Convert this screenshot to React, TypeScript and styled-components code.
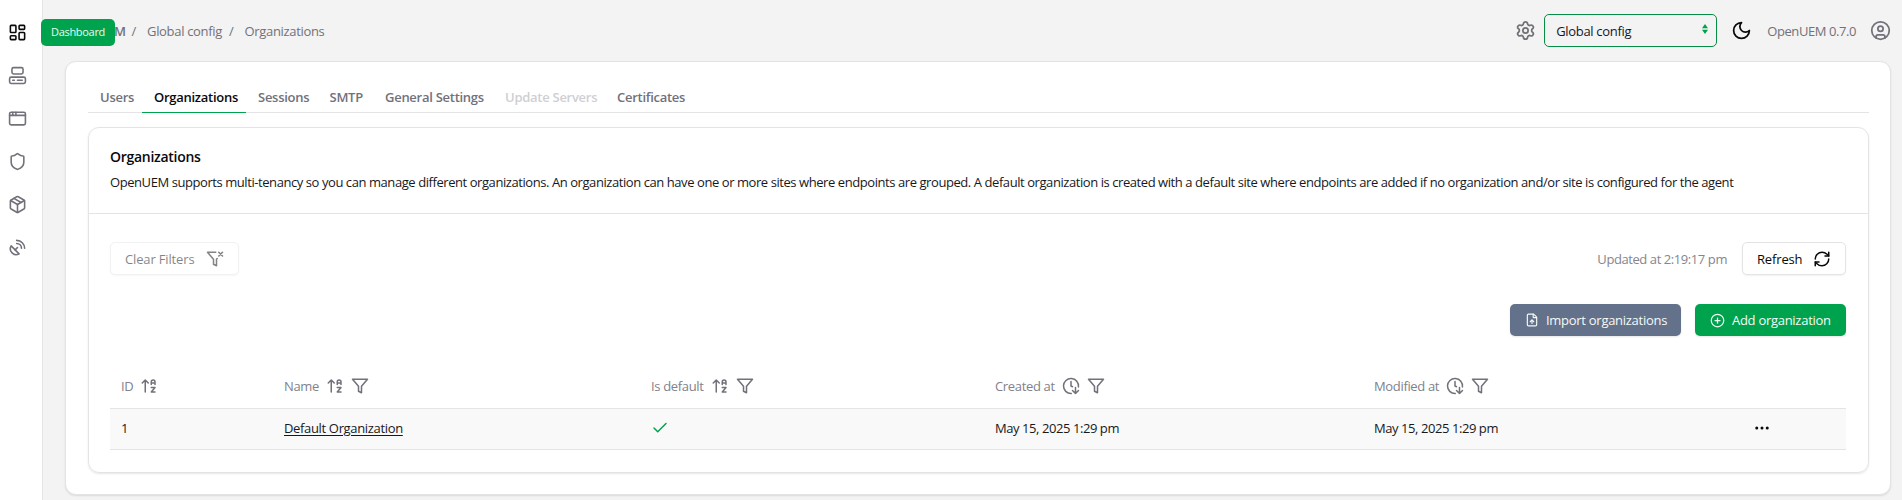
import React from 'react';
import styled, { createGlobalStyle, css } from 'styled-components';
import {
  AppWindow, Check, CircleUser, CirclePlus, Computer, Ellipsis, FileUp, LayoutDashboard,
  Package, RefreshCw, SatelliteDish, Settings, Shield,
} from 'lucide-react';

const green = '#00a34d';
const line = '#e4e4e7';
const muted = '#71717a';

const GlobalStyle = createGlobalStyle`
  *, *::before, *::after { box-sizing: border-box; }
  body {
    margin: 0;
    background: #f3f3f3;
    color: #18181b;
    font: 400 13px/18px "Open Sans", "Noto Sans", sans-serif;
    overflow: hidden;
  }
  svg { display: block; flex: none; }
`;

const Shell = styled.div`
  display: flex;
  height: 500px;
`;

const Sidebar = styled.nav`
  flex: none;
  width: 43px;
  padding-top: 10.5px;
  background: #fff;
  border-right: 1px solid ${line};
`;

const NavItem = styled.a<{ $active?: boolean }>`
  position: relative;
  display: flex;
  align-items: center;
  height: 43px;
  padding-left: 8px;
  color: ${p => (p.$active ? '#09090b' : muted)};
`;

const Tooltip = styled.span`
  position: absolute;
  z-index: 2;
  left: 41px;
  top: 8.5px;
  width: 74px;
  height: 27px;
  border-radius: 5px;
  background: ${green};
  color: #e9faf0;
  font-size: 11px;
  line-height: 26px;
  letter-spacing: -0.3px;
  text-align: center;
`;

const Main = styled.main`
  flex: 1;
  min-width: 0;
  padding: 0 11px 0 22px;
`;

const TopBar = styled.header`
  display: flex;
  justify-content: space-between;
  align-items: center;
  height: 61px;
  color: ${muted};
`;

const Breadcrumb = styled.div`
  display: flex;
  letter-spacing: -0.32px;
`;

const Crumb = styled.span<{ $root?: boolean }>`
  ${p => p.$root
    ? css`width: 59.5px; font-weight: 600; text-align: right;`
    : css`
      &::before { content: '/'; display: inline-block; width: 15.5px; }
      margin-left: 7px;
    `}
`;

const Tools = styled.div`
  display: flex;
  align-items: center;
  color: ${muted};
`;

const TenantSelect = styled.div`
  display: flex;
  align-items: center;
  justify-content: space-between;
  width: 173px;
  height: 33px;
  margin: 0 14px 0 8px;
  padding: 0 8px 0 11px;
  border: 1px solid #078c48;
  border-radius: 5px;
  color: #18181b;
  letter-spacing: -0.32px;
`;

const Version = styled.span`
  margin: 0 14px 0 15px;
  letter-spacing: -0.42px;
`;

const Panel = styled.section`
  height: 434px;
  padding: 22px 21px 0 22px;
  background: #fff;
  border: 1px solid ${line};
  border-radius: 11px;
  box-shadow: 0 1px 2px rgba(0, 0, 0, 0.1);
`;

const Tabs = styled.div`
  display: flex;
  height: 29px;
  border-bottom: 1px solid ${line};
`;

const Tab = styled.span<{ $w: number; $active?: boolean; $disabled?: boolean }>`
  width: ${p => p.$w}px;
  height: 29px;
  padding: 4px 0 0 12px;
  border-bottom: 1px solid ${p => (p.$active ? green : 'transparent')};
  color: ${p => (p.$active ? '#09090b' : p.$disabled ? '#cfcfd3' : muted)};
  font-weight: 600;
  letter-spacing: -0.27px;
  white-space: nowrap;
`;

const Card = styled.section`
  height: 346px;
  margin-top: 14px;
  border: 1px solid ${line};
  border-radius: 11px;
  box-shadow: 0 1px 2px rgba(0, 0, 0, 0.1);
`;

const CardHead = styled.div`
  height: 86px;
  padding: 20px 21px 0;
  border-bottom: 1px solid ${line};
`;

const Title = styled.h3`
  margin: 0;
  color: #09090b;
  font-size: 14px;
  font-weight: 600;
  line-height: 18px;
  letter-spacing: -0.28px;
`;

const Description = styled.p`
  margin: 7px 0 0;
  letter-spacing: -0.43px;
  white-space: nowrap;
`;

const CardBody = styled.div`
  padding: 28px 22px 0 21px;
`;

const Toolbar = styled.div<{ $end?: boolean }>`
  display: flex;
  align-items: center;
  justify-content: ${p => (p.$end ? 'flex-end' : 'space-between')};
  gap: 14px;
  margin-bottom: ${p => (p.$end ? 28 : 29)}px;
`;

const Group = styled.div`
  display: flex;
  align-items: center;
  gap: 15px;
`;

const UpdatedAt = styled.span`
  color: #85858d;
  letter-spacing: -0.42px;
`;

const OutlineButton = styled.button<{ $w: number }>`
  display: flex;
  align-items: center;
  justify-content: space-between;
  width: ${p => p.$w}px;
  height: 33px;
  padding: 0 14px;
  border: 1px solid ${line};
  border-radius: 5px;
  background: #fff;
  box-shadow: 0 1px 2px rgba(0, 0, 0, 0.06);
  color: #09090b;
  font: inherit;
  font-weight: 500;
  letter-spacing: -0.15px;
  &:disabled { opacity: 0.5; }
`;

const SolidButton = styled.button<{ $w: number; $tone: string }>`
  display: flex;
  align-items: center;
  gap: 7px;
  width: ${p => p.$w}px;
  height: 32px;
  padding: 0 0 0 15px;
  border: 0;
  border-radius: 5px;
  background: ${p => p.$tone};
  box-shadow: 0 1px 2px rgba(0, 0, 0, 0.1);
  color: #f4faf6;
  font: inherit;
  font-weight: 500;
  letter-spacing: -0.28px;
  white-space: nowrap;
`;

const row = css`
  display: grid;
  grid-template-columns: 163px 367px 344px 379px 1fr 104px;
  align-items: center;
  border-bottom: 1px solid ${line};
`;

const HeadRow = styled.div`
  ${row}
  height: 45px;
  color: #81818a;
`;

const BodyRow = styled.div`
  ${row}
  height: 41px;
  padding-bottom: 3px;
  background: #f9f9f9;
`;

const Cell = styled.div<{ $tight?: boolean }>`
  display: flex;
  align-items: center;
  gap: 7px;
  padding-left: 11px;
  letter-spacing: ${p => (p.$tight ? -0.43 : -0.34)}px;
  svg { color: ${muted}; }
`;

const OrgLink = styled.a`
  text-decoration: underline;
  text-underline-offset: 2px;
`;

const CheckMark = styled.span`
  svg { color: ${green}; }
`;

const RowMenu = styled.span`
  svg { color: #09090b; }
`;

const strokes = {
  viewBox: '0 0 24 24', fill: 'none', stroke: 'currentColor',
  strokeLinecap: 'round' as const, strokeLinejoin: 'round' as const,
};

const FilterIcon = () => (
  <svg width="18" height="18" strokeWidth="2" {...strokes}>
    <path d="M22 3H2l8 9.46V19l4 2v-8.54L22 3z" />
  </svg>
);

const ClearFilterIcon = () => (
  <svg width="18" height="18" strokeWidth="2" {...strokes}>
    <path d="M13.013 3H2l8 9.46V19l4 2v-8.54l.9-1.055" />
    <path d="m22 3-5 5M17 3l5 5" />
  </svg>
);

const SortIcon = () => (
  <svg width="18" height="18" strokeWidth="2" {...strokes}>
    <path d="m3 8 4-4 4 4M7 4v16M20 8h-5M15 10V6.5a2.5 2.5 0 0 1 5 0V10M15 14h5l-5 6h5" />
  </svg>
);

const ClockIcon = () => (
  <svg width="18" height="18" strokeWidth="2" {...strokes}>
    <path d="M12.338 21.994A10 10 0 1 1 21.925 13.227M12 6v6l2 1M14 18l4 4 4-4M18 14v8" />
  </svg>
);

const MoonIcon = () => (
  <svg width="21" height="21" strokeWidth="2" {...strokes} color="#09090b">
    <path d="M12 3a6 6 0 0 0 9 9 9 9 0 1 1-9-9Z" />
  </svg>
);

const SelectArrows = () => (
  <svg width="6" height="10" viewBox="0 0 6 10" fill={green} transform="translate(0 -2)">
    <path d="M3 0l3 4.2H0zM3 10l3-4.2H0z" />
  </svg>
);

const tabs = [
  { label: 'Users', w: 54 },
  { label: 'Organizations', w: 104, active: true },
  { label: 'Sessions', w: 71.5 },
  { label: 'SMTP', w: 55.5 },
  { label: 'General Settings', w: 120 },
  { label: 'Update Servers', w: 112, disabled: true },
  { label: 'Certificates', w: 92 },
];

export default function App() {
  return (
    <>
      <GlobalStyle />
      <Shell>
        <Sidebar>
          <NavItem $active><LayoutDashboard size={19} /><Tooltip>Dashboard</Tooltip></NavItem>
          <NavItem><Computer size={19} /></NavItem>
          <NavItem><AppWindow size={19} /></NavItem>
          <NavItem><Shield size={19} /></NavItem>
          <NavItem><Package size={19} /></NavItem>
          <NavItem><SatelliteDish size={19} /></NavItem>
        </Sidebar>
        <Main>
          <TopBar>
            <Breadcrumb>
              <Crumb $root>OpenUEM</Crumb>
              <Crumb>Global config</Crumb>
              <Crumb>Organizations</Crumb>
            </Breadcrumb>
            <Tools>
              <Settings size={21} />
              <TenantSelect>Global config<SelectArrows /></TenantSelect>
              <MoonIcon />
              <Version>OpenUEM 0.7.0</Version>
              <CircleUser size={21} />
            </Tools>
          </TopBar>
          <Panel>
            <Tabs>
              {tabs.map(t => (
                <Tab key={t.label} $w={t.w} $active={t.active} $disabled={t.disabled}>{t.label}</Tab>
              ))}
            </Tabs>
            <Card>
              <CardHead>
                <Title>Organizations</Title>
                <Description>
                  OpenUEM supports multi-tenancy so you can manage different organizations. An organization can have one or more sites where endpoints are grouped. A default organization is created with a default site where endpoints are added if no organization and/or site is configured for the agent
                </Description>
              </CardHead>
              <CardBody>
                <Toolbar>
                  <OutlineButton $w={129} disabled>Clear Filters<ClearFilterIcon /></OutlineButton>
                  <Group>
                    <UpdatedAt>Updated at 2:19:17 pm</UpdatedAt>
                    <OutlineButton $w={104}>Refresh<RefreshCw size={18} /></OutlineButton>
                  </Group>
                </Toolbar>
                <Toolbar $end>
                  <SolidButton $w={171} $tone="#64718a"><FileUp size={14} />Import organizations</SolidButton>
                  <SolidButton $w={151} $tone={green}><CirclePlus size={15} />Add organization</SolidButton>
                </Toolbar>
                <HeadRow>
                  <Cell>ID<SortIcon /></Cell>
                  <Cell>Name<SortIcon /><FilterIcon /></Cell>
                  <Cell>Is default<SortIcon /><FilterIcon /></Cell>
                  <Cell>Created at<ClockIcon /><FilterIcon /></Cell>
                  <Cell>Modified at<ClockIcon /><FilterIcon /></Cell>
                </HeadRow>
                <BodyRow>
                  <Cell>1</Cell>
                  <Cell><OrgLink>Default Organization</OrgLink></Cell>
                  <Cell><CheckMark><Check size={18} /></CheckMark></Cell>
                  <Cell $tight>May 15, 2025 1:29 pm</Cell>
                  <Cell $tight>May 15, 2025 1:29 pm</Cell>
                  <Cell><RowMenu><Ellipsis size={18} /></RowMenu></Cell>
                </BodyRow>
              </CardBody>
            </Card>
          </Panel>
        </Main>
      </Shell>
    </>
  );
}
